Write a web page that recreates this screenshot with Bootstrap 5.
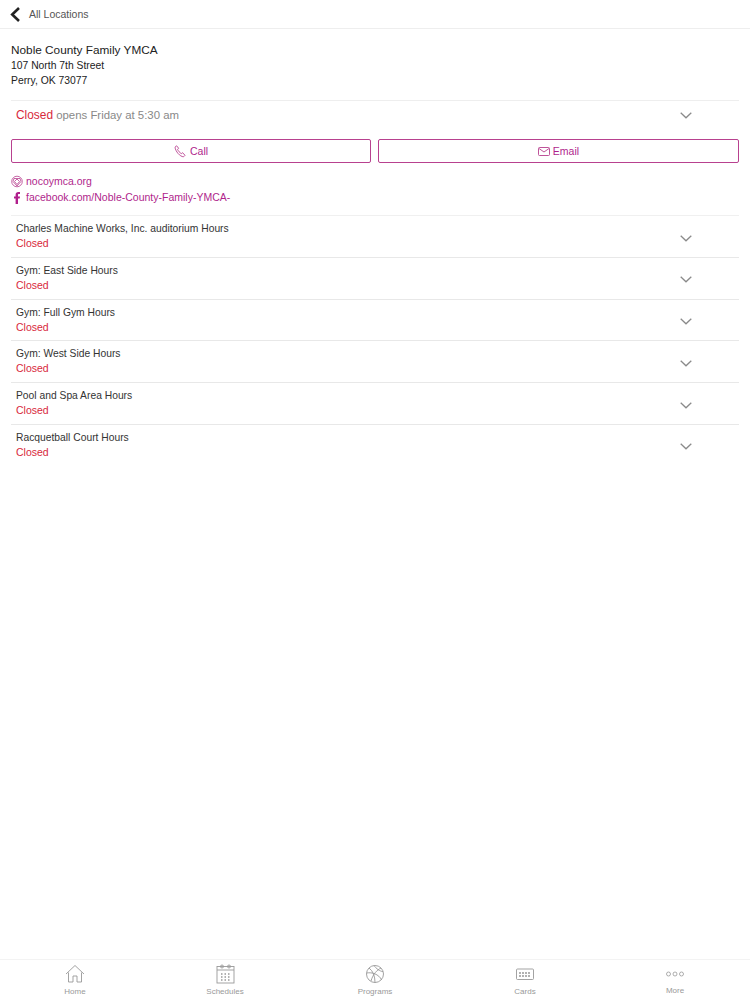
<!doctype html>
<html lang="en"><head><meta charset="utf-8">
<title>Noble County Family YMCA</title>
<link href="https://cdn.jsdelivr.net/npm/bootstrap@5.3.0/dist/css/bootstrap.min.css" rel="stylesheet">
<style>
html,body{height:1000px;overflow:hidden}
body{font-family:"Liberation Sans",Arial,sans-serif;color:#222;background:#fff;font-size:11px;line-height:15px}
.app{height:1000px}
.topbar{height:29px;border-bottom:1px solid #eee;padding-left:10px;gap:9px;color:#555;font-size:10.5px}
.addr{padding:13.5px 11px 0;height:71px;line-height:15.7px;font-size:10.35px}
.addr h1{font-size:11.8px;font-weight:400;line-height:14px;margin:0 0 1px;color:#222}
.rule-wrap{margin:0 11px 0 11px;border-top:1px solid #eee}
.status{height:29px;padding:0 47px 0 5px;font-size:11.4px;color:#888}
.status .closed{font-size:11.9px}
.closed{color:#d8283c}
.cta{gap:7px;padding:9px 11px 0}
.cta a{flex:1 1 0;height:24px;border:1px solid #b8418f;border-radius:2px;color:#b01f8c;font-size:10.5px;text-decoration:none;gap:3px;padding:0}
.cta a:first-child{flex:0 0 360px}
.links{padding:11px 11px 0;height:52px;color:#b01f8c;font-size:10.5px;line-height:15.5px}
.links a{color:#b01f8c;text-decoration:none;gap:3px}
.links .ico{width:12px;height:15px}
.hrs{margin:0 11px;list-style:none;padding:0}
.hrs li{height:41.75px;border-top:1px solid #e8e8e8;padding:5px 47px 0 5px;font-size:10.3px;line-height:15.2px;color:#333}
.hrs li:first-child{border-top-color:#f0f0f0}
.hrs .closed{font-size:10.5px}
.hrs .chev{margin-top:13.5px}
.chev{width:12px;height:7px;flex:none}
.tabbar{height:41px;border-top:1px solid #f3f3f3;color:#999;font-size:8px;line-height:10px}
.tabbar .tabitem{width:150px;padding-top:4px}
.tabbar svg{display:block;height:20px;width:22px;margin-bottom:3px}
.tabbar .lift{margin-top:-1px}
</style></head>
<body>
<div class="app d-flex flex-column">
  <div class="topbar d-flex align-items-center">
    <svg width="10" height="15" viewBox="0 0 10 15" fill="none" stroke="#222" stroke-width="2.6"><path d="M9 1 2.200 7.500 9 14"/></svg>
    <span>All Locations</span>
  </div>
  <div class="addr">
    <h1>Noble County Family YMCA</h1>
    <div>107 North 7th Street</div>
    <div>Perry, OK 73077</div>
  </div>
  <div class="rule-wrap">
    <div class="status d-flex align-items-center justify-content-between">
      <span><span class="closed">Closed</span> opens Friday at 5:30 am</span>
      <svg class="chev" viewBox="0 0 12 7" fill="none" stroke="#8a8a8a" stroke-width="1.3"><path d="M.7.8 6 5.800 11.300.8"/></svg>
    </div>
  </div>
  <div class="cta d-flex">
    <a href="#" class="d-flex align-items-center justify-content-center">
      <svg width="13" height="13" viewBox="0 0 13 13" fill="none" stroke="#b8418f" stroke-width=".9"><path d="M1 2.200 2.600.8l2 2.400-1 1.200c.6 1.600 2.200 3.400 3.800 4.200l1.200-.9 2.400 2.600-1.500 1.500C6 11.600 1.500 6.500 1 2.200z"/></svg>
      <span>Call</span>
    </a>
    <a href="#" class="d-flex align-items-center justify-content-center">
      <svg width="12" height="9" viewBox="0 0 12 9" fill="none" stroke="#b8418f" stroke-width=".9"><rect x=".5" y=".5" width="11" height="8" rx="1"/><path d="m1 1.500 5 3.500 5-3.500"/></svg>
      <span>Email</span>
    </a>
  </div>
  <div class="links">
    <a href="#" class="d-flex align-items-center">
      <svg class="ico" viewBox="0 0 12 15" fill="none" stroke="#b8418f" stroke-width=".8"><circle cx="6" cy="7.500" r="5.300"/><path d="M3 4.500h6l1 3-4 4.500-4-4.500zM3.500 7.500 6 5l2.500 2.500L6 10.500z"/></svg>
      <span>nocoymca.org</span>
    </a>
    <a href="#" class="d-flex align-items-center">
      <svg class="ico" viewBox="0 0 12 15" fill="#b01f8c"><path d="M4.600 14V8.600H3V6.500h1.600V4.800C4.600 3 5.600 2 7.300 2H9v2.100H7.900c-.7 0-.9.400-.9.900v1.500h2L8.700 8.600H7V14z"/></svg>
      <span>facebook.com/Noble-County-Family-YMCA-</span>
    </a>
  </div>
  <ul class="hrs">
    <li class="d-flex align-items-start justify-content-between"><div>Charles Machine Works, Inc. auditorium Hours<div class="closed">Closed</div></div><svg class="chev" viewBox="0 0 12 7" fill="none" stroke="#8a8a8a" stroke-width="1.3"><path d="M.7.8 6 5.800 11.300.8"/></svg></li>
    <li class="d-flex align-items-start justify-content-between"><div>Gym: East Side Hours<div class="closed">Closed</div></div><svg class="chev" viewBox="0 0 12 7" fill="none" stroke="#8a8a8a" stroke-width="1.3"><path d="M.7.8 6 5.800 11.300.8"/></svg></li>
    <li class="d-flex align-items-start justify-content-between"><div>Gym: Full Gym Hours<div class="closed">Closed</div></div><svg class="chev" viewBox="0 0 12 7" fill="none" stroke="#8a8a8a" stroke-width="1.3"><path d="M.7.8 6 5.800 11.300.8"/></svg></li>
    <li class="d-flex align-items-start justify-content-between"><div>Gym: West Side Hours<div class="closed">Closed</div></div><svg class="chev" viewBox="0 0 12 7" fill="none" stroke="#8a8a8a" stroke-width="1.3"><path d="M.7.8 6 5.800 11.300.8"/></svg></li>
    <li class="d-flex align-items-start justify-content-between"><div>Pool and Spa Area Hours<div class="closed">Closed</div></div><svg class="chev" viewBox="0 0 12 7" fill="none" stroke="#8a8a8a" stroke-width="1.3"><path d="M.7.8 6 5.800 11.300.8"/></svg></li>
    <li class="d-flex align-items-start justify-content-between"><div>Racquetball Court Hours<div class="closed">Closed</div></div><svg class="chev" viewBox="0 0 12 7" fill="none" stroke="#8a8a8a" stroke-width="1.3"><path d="M.7.8 6 5.800 11.300.8"/></svg></li>
  </ul>
  <div class="tabbar mt-auto d-flex">
    <div class="tabitem d-flex flex-column align-items-center">
      <svg viewBox="0 0 22 20" fill="none" stroke="#999" stroke-width=".9"><path d="M2 10 11 1.500l9 8.500M4.500 8.500V18h4.500v-6h4v6h4.500V8.500"/></svg><span>Home</span></div>
    <div class="tabitem d-flex flex-column align-items-center">
      <svg viewBox="0 0 22 20" fill="none" stroke="#999" stroke-width=".9"><rect x="3" y="2.500" width="17" height="16.500"/><path d="M3 6h17"/><circle cx="8" cy="2.500" r="1.500"/><circle cx="15" cy="2.500" r="1.500"/><path stroke-width="1.500" stroke-dasharray="1.500 2" d="M7 10h10M7 13h10M7 16h10"/></svg><span>Schedules</span></div>
    <div class="tabitem d-flex flex-column align-items-center">
      <svg viewBox="0 0 22 20" fill="none" stroke="#999" stroke-width=".9"><circle cx="11" cy="10" r="8.500"/><path d="M5 4c4 3 6 8 6 14.500M17 4c-4 2-8 6-10 13M2.700 9c5-1 12 1 15 7M10 1.500c2 3 6 6 9 6"/></svg><span>Programs</span></div>
    <div class="tabitem d-flex flex-column align-items-center">
      <svg viewBox="0 0 22 20" fill="none" stroke="#999" stroke-width=".9"><rect x="2.500" y="5" width="17" height="10.500" rx="1"/><path stroke-width="1.400" stroke-dasharray="2 1" d="M5 9h12M5 12h12"/></svg><span>Cards</span></div>
    <div class="tabitem d-flex flex-column align-items-center">
      <svg viewBox="0 0 22 20" fill="none" stroke="#999" stroke-width=".8"><circle cx="4.500" cy="10" r="2"/><circle cx="11" cy="10" r="2"/><circle cx="17.500" cy="10" r="2"/></svg><span class="lift">More</span></div>
  </div>
</div>
<script src="https://cdn.jsdelivr.net/npm/bootstrap@5.3.0/dist/js/bootstrap.bundle.min.js"></script>
</body></html>
